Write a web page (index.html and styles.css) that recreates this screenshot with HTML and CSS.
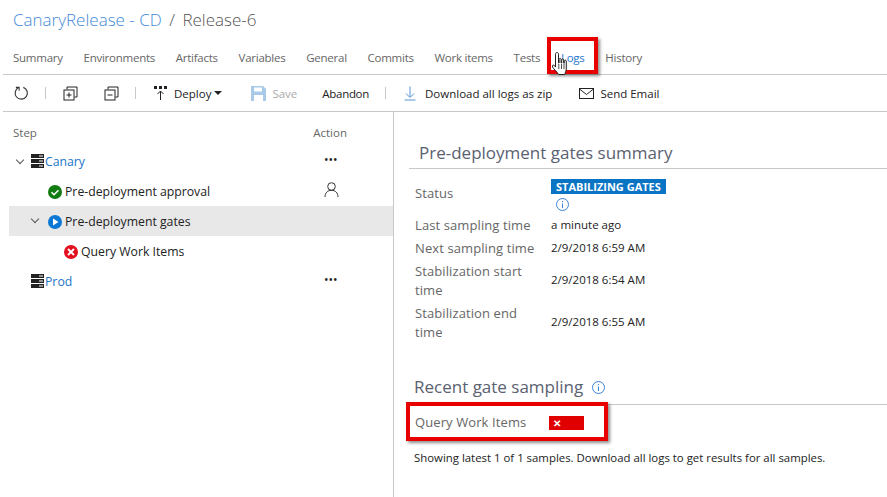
FILE: index.html
```html
<!DOCTYPE html>
<html lang="en">

<head>
    <meta charset="UTF-8">
    <title>Release-6</title>
    <link rel="stylesheet" href="styles.css">
</head>

<body>
    <div class="title"><a class="link-title">CanaryRelease - CD</a> <span class="slash">/</span> Release-6</div>

    <div class="tabs">
        <span class="tab">Summary</span>
        <span class="tab">Environments</span>
        <span class="tab">Artifacts</span>
        <span class="tab">Variables</span>
        <span class="tab">General</span>
        <span class="tab">Commits</span>
        <span class="tab">Work items</span>
        <span class="tab">Tests</span>
        <span class="tab active">Logs</span>
        <span class="tab">History</span>
        <div class="callout callout-logs"></div>
        <svg class="hand" width="20" height="26" viewBox="0 0 20 26">
            <path d="M6 1.500c1 0 1.500.7 1.500 1.700V12h.6V8.500c0-1.400 2-1.400 2 0V12h.6V9c0-1.400 2-1.400 2 0v3.200h.6v-2c0-1.400 2-1.400 2 0V17c0 3-1 4-1.500 6.500H7.500C6.500 21 3 18.500 1.500 16c-.8-1.500.7-2.500 1.800-1.500L4.500 16V3.200c0-1 .5-1.700 1.500-1.700z" fill="#fff" stroke="#222" stroke-width="1"/>
            <path d="M7.800 13v5M10.500 13v5M13 13v5" stroke="#222" stroke-width=".8"/>
        </svg>
    </div>

    <div class="toolbar">
        <svg class="tool-icon" width="15" height="16" viewBox="0 0 16 16" fill="none" stroke="#333"><path d="M5 2.200A6.500 6.500 0 1 0 10 2" stroke-width="1.200"/><path d="M5.500 5.500V2H2" stroke-width="1.100"/></svg>
        <span class="sep"></span>
        <svg class="tool-icon" width="15" height="15" viewBox="0 0 15 15" fill="none" stroke="#222"><path d="M4 3.500V1h10v10h-2.500"/><rect x="1" y="4" width="10" height="10" fill="#fff"/><path d="M3.500 9h5M6 6.500v5"/></svg>
        <svg class="tool-icon gap-l" width="15" height="15" viewBox="0 0 15 15" fill="none" stroke="#222"><path d="M4 3.500V1h10v10h-2.500"/><rect x="1" y="4" width="10" height="10" fill="#fff"/><path d="M3.500 9h5"/></svg>
        <span class="sep"></span>
        <span class="tool deploy">
            <svg width="15" height="16" viewBox="0 0 15 16"><path d="M1 1h3v3H1zM6 1h3v3H6zM11 1h3v3h-3z" fill="#222"/><path d="M7.500 15V6.500M4.500 9l3-3 3 3" fill="none" stroke="#222"/></svg>
            Deploy<span class="caret"></span>
        </span>
        <span class="tool save">
            <svg width="15" height="15" viewBox="0 0 15 15"><path d="M0 0h12l3 3v12H0z" fill="#a9c9e8"/><path d="M3 1.500h8v4H3z" fill="#fff"/><path d="M3 9h9v6H3z" fill="#fff"/></svg>
            Save
        </span>
        <span class="tool abandon">Abandon</span>
        <span class="sep"></span>
        <span class="tool download">
            <svg width="14" height="15" viewBox="0 0 14 15" fill="none" stroke="#5b93d3"><path d="M7 .500V11M3 7.500l4 4 4-4M1.500 14h11"/></svg>
            Download all logs as zip
        </span>
        <span class="tool email">
            <svg width="15" height="11" viewBox="0 0 15 11" fill="none" stroke="#222"><rect x=".5" y=".5" width="14" height="10"/><path d="M.5 1l7 5.500 7-5.500"/></svg>
            Send Email
        </span>
    </div>

    <div class="split">
        <div class="left">
            <div class="step-head"><span>Step</span><span class="action-head">Action</span></div>

            <div class="row">
                <span class="chev"></span>
                <svg class="server" width="13" height="14" viewBox="0 0 13 14"><path d="M0 0h13v4H0zM0 5h13v4H0zM0 10h13v4H0z" fill="#222"/><path d="M8 2h4M8 7h4M8 12h4" stroke="#fff"/></svg>
                <span class="env-link">Canary</span>
                <span class="dots">•••</span>
            </div>
            <div class="row indent-1">
                <svg class="status" width="14" height="14" viewBox="0 0 14 14"><circle cx="7" cy="7" r="7" fill="#107c10"/><path d="M3.500 7.200l2.500 2.500 4.500-4.500" fill="none" stroke="#fff" stroke-width="1.600"/></svg>
                <span>Pre-deployment approval</span>
                <svg class="person" width="15" height="15" viewBox="0 0 15 15" fill="none" stroke="#333"><circle cx="7.500" cy="4.500" r="3.800"/><path d="M1 15c0-4 2.500-6.700 6.500-6.700S14 11 14 15"/></svg>
            </div>
            <div class="row indent-1 selected">
                <span class="chev chev-inner"></span>
                <svg class="status" width="14" height="14" viewBox="0 0 14 14"><circle cx="7" cy="7" r="7" fill="#0a78d4"/><path d="M5 3.500v7l5.500-3.500z" fill="#fff"/></svg>
                <span>Pre-deployment gates</span>
            </div>
            <div class="row indent-2">
                <svg class="status" width="14" height="14" viewBox="0 0 14 14"><circle cx="7" cy="7" r="7" fill="#e3101f"/><path d="M4 4l6 6M10 4l-6 6" stroke="#fff" stroke-width="1.800"/></svg>
                <span>Query Work Items</span>
            </div>
            <div class="row">
                <span class="chev blank"></span>
                <svg class="server" width="13" height="14" viewBox="0 0 13 14"><path d="M0 0h13v4H0zM0 5h13v4H0zM0 10h13v4H0z" fill="#222"/><path d="M8 2h4M8 7h4M8 12h4" stroke="#fff"/></svg>
                <span class="env-link">Prod</span>
                <span class="dots">•••</span>
            </div>
        </div>

        <div class="right">
            <h2 class="section-head">Pre-deployment gates summary</h2>
            <div class="info-grid">
                <div class="label status-label">Status</div>
                <div class="status-value">
                    <span class="badge">STABILIZING GATES</span>
                    <svg class="info" width="13" height="13" viewBox="0 0 13 13" fill="none" stroke="#3b82d6"><circle cx="6.500" cy="6.500" r="6"/><path d="M6.500 5.500v4.500M6.500 3v1.200"/></svg>
                </div>
                <div class="label">Last sampling time</div><div class="value">a minute ago</div>
                <div class="label">Next sampling time</div><div class="value">2/9/2018 6:59 AM</div>
                <div class="label">Stabilization start time</div><div class="value">2/9/2018 6:54 AM</div>
                <div class="label">Stabilization end time</div><div class="value">2/9/2018 6:55 AM</div>
            </div>

            <h2 class="section-head recent">Recent gate sampling
                <svg class="info" width="13" height="13" viewBox="0 0 13 13" fill="none" stroke="#3b82d6"><circle cx="6.500" cy="6.500" r="6"/><path d="M6.500 5.500v4.500M6.500 3v1.200"/></svg>
            </h2>
            <div class="sample-row">
                <div class="callout callout-sample"></div>
                <span class="label">Query Work Items</span>
                <span class="sample-bar">✕</span>
            </div>
            <p class="note">Showing latest 1 of 1 samples. Download all logs to get results for all samples.</p>
        </div>
    </div>
</body>

</html>
```

FILE: styles.css
```css
body {
    margin: 0;
    height: 497px;
    overflow: hidden;
    background: #fff;
    color: #222;
    font-family: "Open Sans", "Noto Sans", sans-serif;
    font-size: 11.5px;
}

.title {
    padding: 9px 0 0 13px;
    height: 34px;
    font-size: 17px;
    font-weight: 300;
    line-height: 22px;
    color: #555;
}

.link-title {
    color: #3f8ad6;
}

.slash {
    margin: 0 3px;
}

.tabs {
    position: relative;
    display: flex;
    gap: 20.75px;
    height: 29px;
    margin-left: 3px;
    padding: 0 0 2px 10px;
    align-items: center;
    border-bottom: 1px solid #c8c8c8;
    color: #666;
    letter-spacing: -0.25px;
}

.tab.active {
    color: #2a78d0;
}

.callout {
    position: absolute;
    border: 4px solid #e80000;
    box-shadow: 2px 2px 3px rgba(0, 0, 0, 0.45);
}

.callout-logs {
    left: 544px;
    top: -6px;
    width: 43px;
    height: 29px;
}

.hand {
    position: absolute;
    left: 548px;
    top: 8px;
}

.toolbar {
    display: flex;
    align-items: center;
    height: 36px;
    margin-left: 3px;
    padding-left: 11px;
    border-bottom: 1px solid #c8c8c8;
}

.tool-icon {
    flex: none;
}

.gap-l {
    margin-left: 26px;
}

.sep {
    width: 1px;
    height: 12px;
    background: #c8c8c8;
    margin: 0 17px 0 16px;
}

.tool {
    display: flex;
    align-items: center;
    gap: 6px;
}

.caret {
    width: 0;
    height: 0;
    margin-left: -3px;
    border-left: 4px solid transparent;
    border-right: 4px solid transparent;
    border-top: 4px solid #222;
}

.save {
    margin-left: 29px;
    color: #aaa;
}

.abandon {
    margin-left: 25px;
    letter-spacing: -0.3px;
}

.download {
    gap: 8px;
}

.email {
    margin-left: 27px;
}

.split {
    display: flex;
    height: 385px;
}

.left {
    width: 384px;
    margin-left: 9px;
    border-right: 1px solid #c8c8c8;
}

.step-head {
    display: flex;
    justify-content: space-between;
    height: 34px;
    padding: 13px 46px 0 4px;
    box-sizing: border-box;
    line-height: 16px;
    color: #666;
}

.row {
    position: relative;
    display: flex;
    align-items: center;
    height: 30px;
    padding-left: 6px;
    font-size: 12.25px;
}

.row.indent-1 {
    padding-left: 39px;
    gap: 3px;
}

.row.indent-2 {
    padding-left: 55px;
    gap: 3px;
}

.row.selected {
    background: #e8e8e8;
}

.chev {
    width: 5px;
    height: 5px;
    margin: 0 7px 3px 2px;
    border-right: 1px solid #555;
    border-bottom: 1px solid #555;
    transform: rotate(45deg);
}

.chev.blank {
    visibility: hidden;
}

.chev-inner {
    position: absolute;
    left: 23px;
    top: 10px;
    margin: 0;
}

.server {
    margin: 0 1px;
}

.env-link {
    color: #1b74c8;
}

.dots {
    position: absolute;
    left: 315px;
    top: 5px;
    font-size: 12px;
    color: #222;
}

.person {
    position: absolute;
    left: 315px;
    top: 6px;
}

.status {
    margin-top: 2px;
}

.right {
    flex: 1;
    padding: 0 0 0 15px;
}

.section-head {
    margin: 30px 0 0;
    height: 26px;
    padding-left: 10px;
    font-size: 17px;
    font-weight: 400;
    line-height: 22px;
    color: #5a6170;
    border-bottom: 1px solid #c8c8c8;
}

.info-grid {
    display: grid;
    grid-template-columns: 136px 1fr;
    padding: 10px 0 0 6px;
    line-height: 19px;
}

.info-grid > .label {
    padding: 2px 0;
    align-self: center;
    width: 125px;
}

.label {
    color: #666;
    font-size: 13px;
    letter-spacing: 0.1px;
}

.info-grid > .status-label {
    padding: 0 0 7px;
}

.status-value {
    display: flex;
    flex-direction: column;
    align-items: flex-start;
    gap: 4px;
    margin-bottom: 3px;
}

.badge {
    padding: 0 5px;
    line-height: 15px;
    background: #0a74c4;
    color: #fff;
    font-size: 11px;
    font-weight: 700;
}

.status-value .info {
    margin-left: 5px;
}

.value {
    margin-bottom: 3px;
    font-size: 11.5px;
    align-self: center;
}

.section-head.recent {
    margin: 32px 0 0 5px;
    padding-left: 0;
    height: 28px;
}

.section-head .info {
    margin-left: 4px;
    vertical-align: -1px;
}

.sample-row {
    position: relative;
    display: flex;
    align-items: center;
    gap: 22px;
    height: 36px;
    padding: 0 0 0 6px;
}

.sample-row > .label {
    margin-bottom: 2px;
}

.callout-sample {
    left: -3px;
    top: -3px;
    width: 194px;
    height: 31px;
}

.sample-bar {
    width: 35px;
    height: 14px;
    margin-left: 1px;
    padding-left: 4px;
    box-sizing: border-box;
    background: #e00000;
    color: #fff;
    font-size: 10px;
    font-weight: 700;
    line-height: 14px;
    letter-spacing: 0;
}

.note {
    margin: 9px 0 0 5px;
    font-size: 11.4px;
    line-height: 16px;
    white-space: nowrap;
}
```
